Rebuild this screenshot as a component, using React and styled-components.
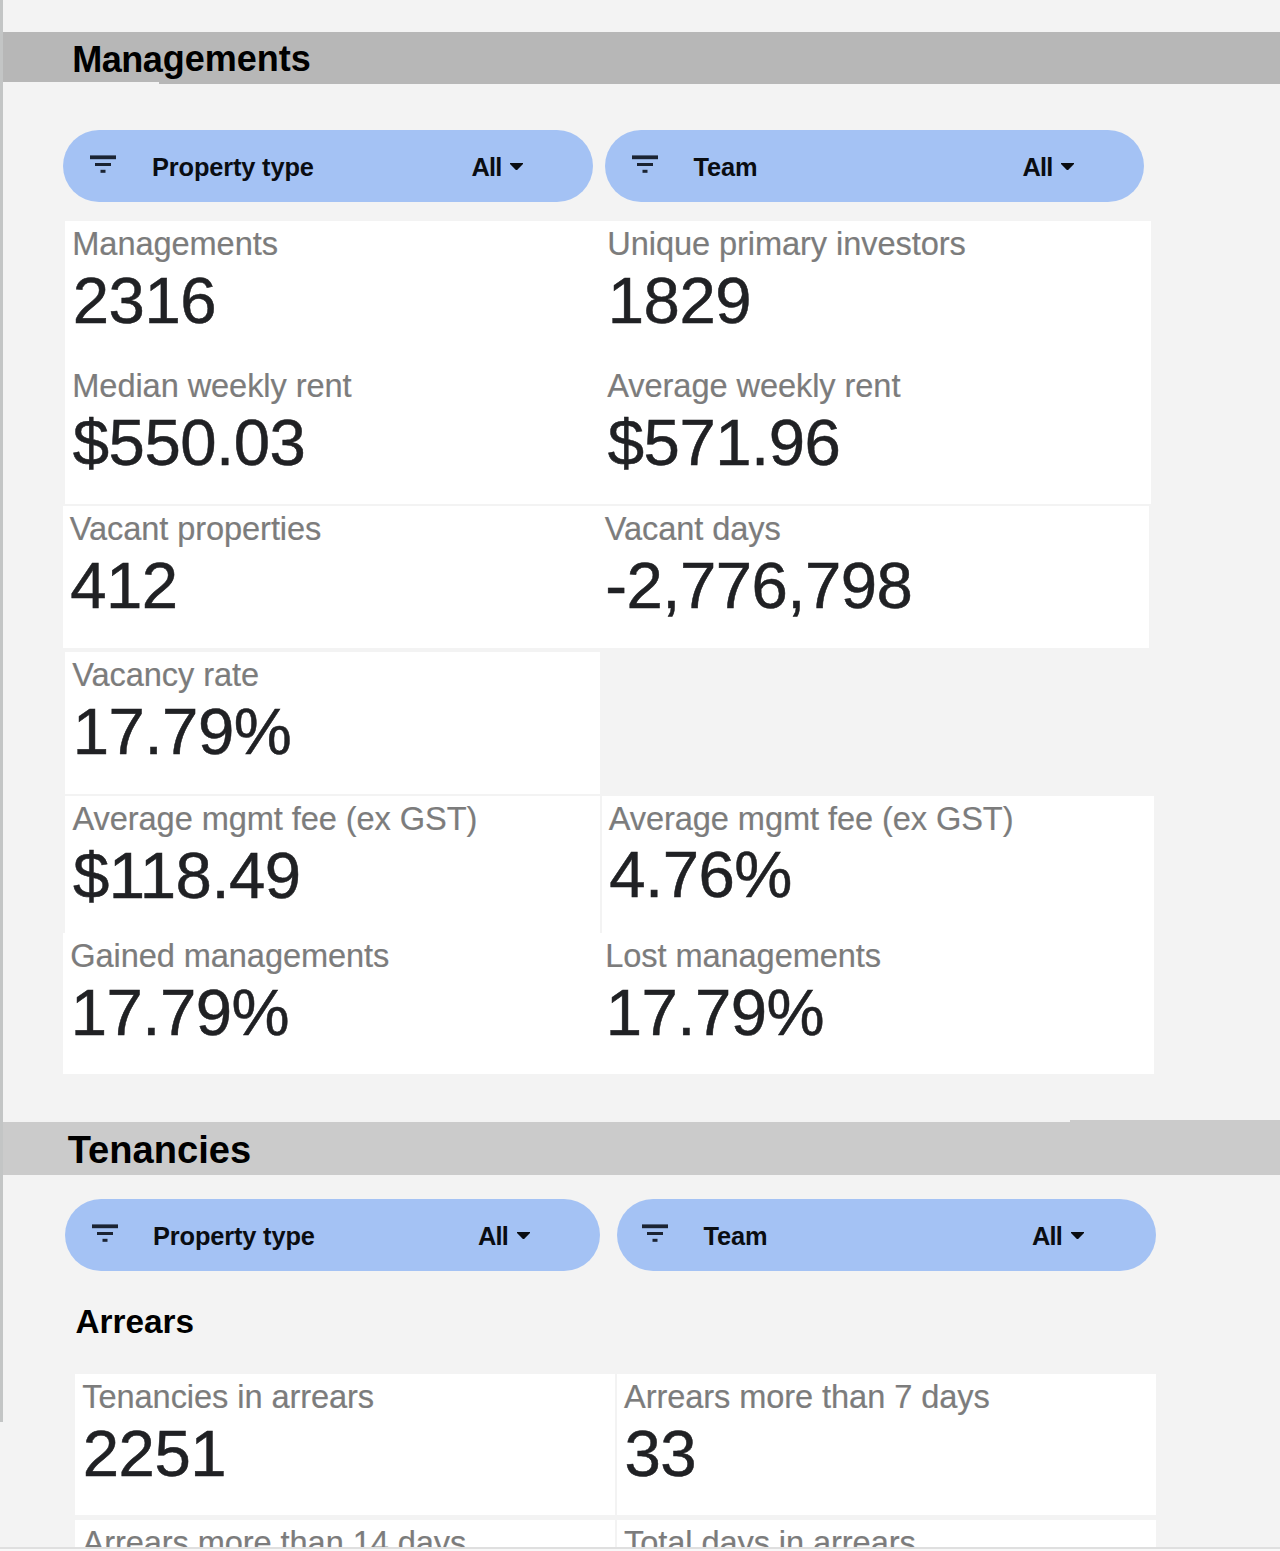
import React from 'react';
import styled, { createGlobalStyle } from 'styled-components';

const managements = [
  [
    { label: 'Managements', value: '2316' },
    { label: 'Unique primary investors', value: '1829' },
  ],
  [
    { label: 'Median weekly rent', value: '$550.03' },
    { label: 'Average weekly rent', value: '$571.96' },
  ],
];

const vacant = [
  { label: 'Vacant properties', value: '412' },
  { label: 'Vacant days', value: '-2,776,798' },
];

const turnover = [
  { label: 'Gained managements', value: '17.79%' },
  { label: 'Lost managements', value: '17.79%' },
];

function Filter({ name, width, start = 27, end = 70, gap = 36 }) {
  return (
    <Pill $width={width} $start={start} $end={end}>
      <FilterIcon viewBox="0 0 26 18">
        <rect x="0" y="0.4" width="26" height="3.8" />
        <rect x="5" y="8" width="16" height="3" />
        <rect x="10.5" y="14.8" width="5" height="3" />
      </FilterIcon>
      <PillName $gap={gap}>{name}</PillName>
      <PillValue>All</PillValue>
      <Caret viewBox="0 0 13 7">
        <path d="M0 0h13v1L7.6 6.4q-1.1 1-2.2 0L0 1z" />
      </Caret>
    </Pill>
  );
}

function Metric({ label, value, lift, ...rest }) {
  return (
    <Tile {...rest}>
      <Label>{label}</Label>
      <Value $lift={lift}>{value}</Value>
    </Tile>
  );
}

export default function App() {
  return (
    <Page>
      <GlobalStyle />
      <Board>
        <Rail />
        <Content>
          <Bar $top={32} $height={52}>
            <BarPart $width={156} $height={50} $color="#b7b7b7">
              <Title $start={69.3} $line={55} $size={36.1} $tight>Mana</Title>
            </BarPart>
            <BarPart $height={52} $color="#b7b7b7">
              <Title $start={3.8} $line={53} $size={36}>gements</Title>
            </BarPart>
          </Bar>

          <Filters $top={46} $left={60} $gap={11.5}>
            <Filter name="Property type" width={530} />
            <Filter name="Team" width={539.5} />
          </Filters>

          <Panel $top={19} $left={62} $width={1086}>
            {managements.map((row, i) => (
              <Row key={i} $height={i ? 141 : 142}>
                {row.map((m) => <Metric key={m.label} {...m} $pad={7.3} />)}
              </Row>
            ))}
          </Panel>
          <Panel $top={2} $left={60} $width={1086}>
            <Row $height={142}>
              {vacant.map((m) => <Metric key={m.label} {...m} $pad={6.7} />)}
            </Row>
          </Panel>
          <Panel $top={4} $left={62} $width={535}>
            <Row $height={142}>
              <Metric label="Vacancy rate" value="17.79%" $pad={7.3} />
            </Row>
          </Panel>
          <Split $top={2} $left={62} $width={1088.5} $height={137}>
            <Metric label="Average mgmt fee (ex GST)" value="$118.49" $pad={7.5} $white />
            <Metric label="Average mgmt fee (ex GST)" value="4.76%" $pad={6.7} $white lift />
          </Split>
          <Panel $top={0} $left={60} $width={1090.5}>
            <Row $height={141}>
              {turnover.map((m) => <Metric key={m.label} {...m} $pad={7.2} />)}
            </Row>
          </Panel>

          <Bar $top={46} $height={55}>
            <BarPart $width={1067} $height={53} $color="#cbcbcb" $low>
              <Title $start={64.7} $line={57} $size={38.1}>Tenancies</Title>
            </BarPart>
            <BarPart $height={55} $color="#cbcbcb" />
          </Bar>

          <Filters $top={24} $left={62} $gap={17}>
            <Filter name="Property type" width={534.5} gap={35} />
            <Filter name="Team" width={539.5} start={25} end={72.5} />
          </Filters>

          <SubTitle>Arrears</SubTitle>
          <Split $top={33} $left={72} $width={1081} $height={141} $even>
            <Metric label="Tenancies in arrears" value="2251" $pad={7.3} $white />
            <Metric label="Arrears more than 7 days" value="33" $pad={7.5} $white />
          </Split>
          <Split $top={5} $left={72} $width={1081} $height={141} $even>
            <Metric label="Arrears more than 14 days" $pad={7.5} $white />
            <Metric label="Total days in arrears" $pad={7.5} $white />
          </Split>
        </Content>
      </Board>
    </Page>
  );
}

const GlobalStyle = createGlobalStyle`
  body {
    margin: 0;
    background: #f8f8f8;
    overflow: hidden;
    font-family: "Liberation Sans", Arial, sans-serif;
  }
  * {
    box-sizing: border-box;
  }
`
const Page = styled.div`
  width: 1280px;
  height: 1551px;
`
const Board = styled.div`
  display: flex;
  align-items: flex-start;
  height: 1549px;
  overflow: hidden;
  background: #f3f3f3;
  border-bottom: 2px solid #dfdfdf;
`
const Rail = styled.div`
  width: 3px;
  height: 1422px;
  background: #c3c5c5;
`
const Content = styled.div`
  display: flow-root;
  flex: 1;
`
const Bar = styled.div`
  display: flex;
  height: ${(p) => p.$height}px;
  margin-top: ${(p) => p.$top}px;
`
const BarPart = styled.div`
  flex: ${(p) => (p.$width ? `0 0 ${p.$width}px` : '1')};
  min-width: 0;
  align-self: ${(p) => (p.$low ? 'flex-end' : 'flex-start')};
  height: ${(p) => p.$height}px;
  background: ${(p) => p.$color};
  z-index: ${(p) => (p.$width ? 1 : 0)};
`
const Title = styled.div`
  padding-left: ${(p) => p.$start}px;
  font-size: ${(p) => p.$size}px;
  line-height: ${(p) => p.$line}px;
  font-weight: 700;
  letter-spacing: ${(p) => (p.$tight ? '-0.6px' : 'normal')};
  color: #000;
  white-space: nowrap;
`
const Filters = styled.div`
  display: flex;
  gap: ${(p) => p.$gap}px;
  margin: ${(p) => p.$top}px 0 0 ${(p) => p.$left}px;
`
const Pill = styled.div`
  display: flex;
  align-items: center;
  width: ${(p) => p.$width}px;
  height: 72px;
  padding: 0 ${(p) => p.$end}px 0 ${(p) => p.$start}px;
  border-radius: 36px;
  background: #a4c2f4;
  font-size: 25.4px;
  line-height: 30px;
  font-weight: 700;
  color: #0a0d12;
`
const FilterIcon = styled.svg`
  width: 26px;
  height: 18px;
  margin-bottom: 4px;
  fill: #1b2433;
`
const PillName = styled.span`
  margin-left: ${(p) => p.$gap}px;
  padding-top: 2px;
  letter-spacing: -0.15px;
`
const PillValue = styled.span`
  margin-left: auto;
  padding-top: 2px;
  letter-spacing: -0.8px;
`
const Caret = styled.svg`
  width: 13px;
  height: 7px;
  margin-left: 8.5px;
  fill: #0a0d12;
`
const Panel = styled.div`
  width: ${(p) => p.$width}px;
  margin: ${(p) => p.$top}px 0 0 ${(p) => p.$left}px;
  background: #fff;
`
const Row = styled.div`
  display: grid;
  grid-template-columns: 535px 1fr;
  height: ${(p) => p.$height}px;
`
const Split = styled.div`
  display: grid;
  grid-template-columns: ${(p) => (p.$even ? '1fr 1fr' : '535px 1fr')};
  gap: 2px;
  width: ${(p) => p.$width}px;
  height: ${(p) => p.$height}px;
  margin: ${(p) => p.$top}px 0 0 ${(p) => p.$left}px;
`
const Tile = styled.div`
  padding: 3px 0 0 ${(p) => p.$pad}px;
  background: ${(p) => (p.$white ? '#fff' : 'transparent')};
  white-space: nowrap;
`
const Label = styled.div`
  font-size: 32.6px;
  line-height: 40px;
  letter-spacing: -0.08px;
  color: #7c7c7c;
  -webkit-text-stroke: 0.2px #7c7c7c;
`
const Value = styled.div`
  margin: ${(p) => (p.$lift ? 2 : 3)}px 0 0 0.5px;
  font-size: 65.3px;
  line-height: 68px;
  letter-spacing: -0.5px;
  color: #202124;
  -webkit-text-stroke: 0.5px #202124;
`
const SubTitle = styled.h3`
  margin: 32px 0 0 72.5px;
  font-size: 33.3px;
  line-height: 38px;
  font-weight: 700;
  color: #000;
`
